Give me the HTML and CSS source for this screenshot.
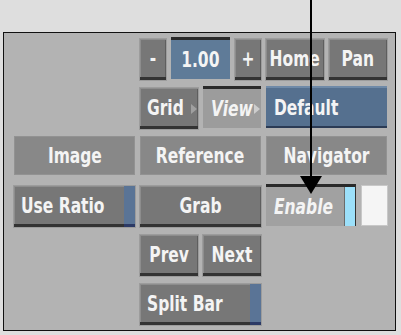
FILE: index.html
```html
<!DOCTYPE html>
<html>
<head>
<meta charset="utf-8">
<link rel="stylesheet" href="styles.css">
</head>
<body>
<div class="panel">
  <div class="grid">
    <div class="cell"></div>
    <div class="cell split">
      <div class="btn w26 center"><span class="t">-</span></div>
      <div class="pressed blue grow center"><span class="t">1.00</span></div>
      <div class="btn w26 center"><span class="t">+</span></div>
    </div>
    <div class="cell split">
      <div class="btn grow center"><span class="t">Home</span></div>
      <div class="btn grow center"><span class="t">Pan</span></div>
    </div>

    <div class="cell"></div>
    <div class="cell split">
      <div class="btn grow left menu"><span class="t">Grid</span><span class="tri"></span></div>
      <div class="pressed light grow left menu italic"><span class="t">View</span><span class="tri tri-light"></span></div>
    </div>
    <div class="cell">
      <div class="pressed default grow left"><span class="t">Default</span></div>
    </div>

    <div class="cell"><div class="flat"><span class="t">Image</span></div></div>
    <div class="cell"><div class="flat"><span class="t">Reference</span></div></div>
    <div class="cell"><div class="flat"><span class="t">Navigator</span></div></div>

    <div class="cell">
      <div class="btn grow left bar"><span class="t">Use Ratio</span><span class="bluebar"></span></div>
    </div>
    <div class="cell">
      <div class="btn grow center"><span class="t">Grab</span></div>
    </div>
    <div class="cell split six">
      <div class="pressed light grow left italic enable"><span class="t">Enable</span><span class="cyanbar"></span></div>
      <div class="swatch"></div>
    </div>

    <div class="cell"></div>
    <div class="cell split">
      <div class="btn grow center"><span class="t">Prev</span></div>
      <div class="btn grow center"><span class="t">Next</span></div>
    </div>
    <div class="cell"></div>

    <div class="cell"></div>
    <div class="cell">
      <div class="btn grow left bar"><span class="t">Split Bar</span><span class="bluebar"></span></div>
    </div>
    <div class="cell"></div>
  </div>
</div>
<svg class="pointer" width="401" height="335" viewBox="0 0 401 335">
  <rect x="310" y="0" width="2" height="180" fill="#000"/>
  <polygon points="300,176 322,176 311,194" fill="#000"/>
</svg>
</body>
</html>
```

FILE: styles.css
```css
html, body {
  margin: 0;
  padding: 0;
}
body {
  background: #dedede;
  width: 401px;
  height: 335px;
  position: relative;
  overflow: hidden;
  font-family: "DejaVu Sans Condensed", "DejaVu Sans", sans-serif;
  font-weight: bold;
  font-size: 21px;
  color: #f4f4f4;
}
.t {
  display: inline-block;
  white-space: nowrap;
  transform: scaleX(0.82);
  transform-origin: center;
}
.left .t {
  transform-origin: left center;
}
.panel {
  position: relative;
  margin: 32px 0 0 3px;
  width: 393px;
  box-sizing: border-box;
  border: 1px solid #111;
  background: #b3b3b3;
  padding: 4px 8px 5px 10px;
}
.grid {
  display: grid;
  grid-template-columns: 121px 121px 121px;
  grid-template-rows: repeat(6, 43px);
  column-gap: 5px;
  row-gap: 6px;
}
.cell {
  display: flex;
  min-width: 0;
}
.split {
  gap: 5px;
}
.split.six {
  gap: 6px;
}
.grow {
  flex: 1;
  min-width: 0;
}
.w26 {
  width: 26px;
  flex: none;
}
.center {
  justify-content: center;
}
.left {
  justify-content: flex-start;
  padding-left: 8px;
}
.btn {
  position: relative;
  display: flex;
  align-items: center;
  box-sizing: border-box;
  margin-top: 2px;
  height: 41px;
  padding-top: 2px;
  background: #777;
  border-bottom: 3px solid #333;
  box-shadow: inset 1px 1px 0 #8d8d8d, inset -1px 0 0 #5e5e5e, 0 0 0 1px #9c9c9c;
}
.btn.left {
  padding-left: 7px;
}
.pressed {
  position: relative;
  display: flex;
  align-items: center;
  box-sizing: border-box;
  height: 42px;
  border-top: 3px solid #2a2a2a;
  padding-top: 1px;
}
.blue {
  background: #5f7b98;
}
.light {
  background: #9c9c9c;
}
.default {
  background: #55708f;
  border-top: 2px solid #6f8aa8;
  border-bottom: 2px solid #2b3b55;
  padding-left: 8px;
}
.italic {
  font-style: italic;
}
.flat {
  margin-top: 1px;
  height: 39px;
  padding-top: 1px;
  box-sizing: border-box;
  width: 100%;
  background: #888;
  display: flex;
  align-items: center;
  justify-content: center;
  box-shadow: inset 0 0 0 1px #929292;
}
.menu .tri {
  position: absolute;
  right: 1px;
  top: 16px;
  width: 0;
  height: 0;
  border-top: 5px solid transparent;
  border-bottom: 5px solid transparent;
  border-left: 6px solid #a0a0a0;
}
.menu .tri-light {
  border-left-color: #cdcdcd;
  top: 15px;
}
.bar {
  padding-right: 12px;
}
.bluebar {
  position: absolute;
  right: 0;
  top: 0;
  bottom: -3px;
  width: 11px;
  background: #5a7496;
  border-bottom: 3px solid #2c3a66;
  box-sizing: border-box;
}
.enable {
  background: #a1a1a1;
  border-right: 1px solid #333;
}
.cyanbar {
  position: absolute;
  right: 0;
  top: 0;
  bottom: 0;
  width: 10px;
  background: #9ce0fa;
  box-shadow: -1px 0 0 #6b6b6b;
}
.swatch {
  width: 25px;
  flex: none;
  margin-top: 2px;
  height: 39px;
  background: #f5f5f5;
  box-shadow: 0 0 0 1px #c8c8c8;
}
.pointer {
  position: absolute;
  left: 0;
  top: 0;
  pointer-events: none;
}
```
